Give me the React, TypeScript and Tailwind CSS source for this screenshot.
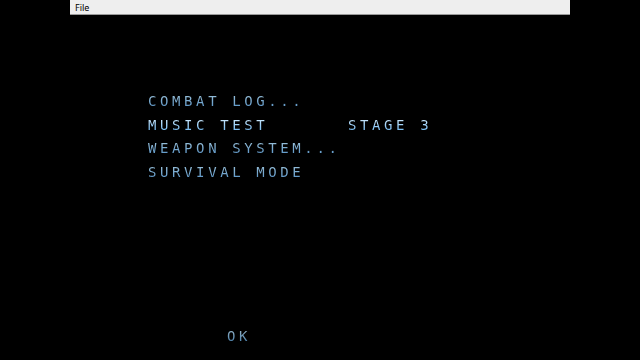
export default function App() {
  const mono = { fontFamily: '"DejaVu Sans Mono", "Liberation Mono", monospace' };
  const dim = "bg-linear-to-b from-[#b0d0e0] to-[#3a80bc] bg-clip-text text-transparent";
  const bright = "bg-linear-to-b from-[#f0fbff] to-[#3aa2ec] bg-clip-text text-transparent";
  return (
    <div className="w-[640px] h-[360px] bg-black flex flex-col overflow-hidden">
      <div className="ml-[70px] w-[500px] h-[15px] bg-[#eeeeee] border-b border-[#9a9a9a] flex items-center px-[5px] shrink-0">
        <span className="text-[9px] text-black leading-none" style={{ fontFamily: '"Noto Sans", "DejaVu Sans", sans-serif' }}>File</span>
      </div>
      <div className="flex flex-col pl-[148px] pt-[75px] text-[14px] leading-[23.7px] tracking-[3.6px] whitespace-pre" style={mono}>
        <span className={dim + " w-fit"}>COMBAT LOG...</span>
        <div className="flex">
          <span className={bright + " w-[200px]"}>MUSIC TEST</span>
          <span className={bright}>STAGE 3</span>
        </div>
        <span className={dim + " w-fit"}>WEAPON SYSTEM...</span>
        <span className={dim + " w-fit"}>SURVIVAL MODE</span>
      </div>
      <div className="pl-[227px] mt-[140px] text-[14px] leading-[23.7px] tracking-[3.6px]" style={mono}>
        <span className="bg-linear-to-b from-[#a0bccc] to-[#3f7aa8] bg-clip-text text-transparent">OK</span>
      </div>
    </div>
  );
}
